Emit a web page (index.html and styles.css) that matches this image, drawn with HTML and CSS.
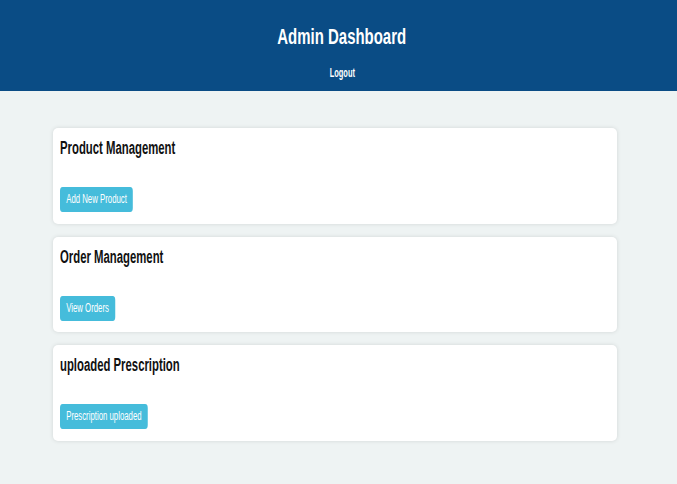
FILE: index.html
```html
<!DOCTYPE html>
<html>
<head>
<meta charset="utf-8">
<link rel="stylesheet" href="styles.css">
</head>
<body>
<header class="topbar">
  <h1 class="title"><span class="squeeze">Admin Dashboard</span></h1>
  <nav class="nav"><a class="logout" href="#">Logout</a></nav>
</header>
<main class="content">
  <section class="card">
    <h2 class="card-title"><span class="squeeze-left">Product Management</span></h2>
    <a class="btn" href="#">Add New Product</a>
  </section>
  <section class="card">
    <h2 class="card-title"><span class="squeeze-left">Order Management</span></h2>
    <a class="btn" href="#">View Orders</a>
  </section>
  <section class="card">
    <h2 class="card-title"><span class="squeeze-left">uploaded Prescription</span></h2>
    <a class="btn" href="#">Prescription uploaded</a>
  </section>
</main>
</body>
</html>
```

FILE: styles.css
```css
html, body {
  margin: 0;
  padding: 0;
}
body {
  background: #eef3f3;
  font-family: "Liberation Sans", Arial, sans-serif;
  color: #111;
  min-height: 484px;
}
.squeeze {
  display: inline-block;
  transform: scaleX(0.68);
  transform-origin: center;
}
.squeeze-left {
  display: inline-block;
  transform: scaleX(0.63);
  transform-origin: left center;
  white-space: nowrap;
}
.topbar {
  background: #0a4c85;
  height: 91px;
  box-sizing: border-box;
  padding: 23px 0 0 7px;
  text-align: center;
  color: #fff;
}
.title {
  margin: 0;
  font-size: 22px;
  line-height: 27px;
  font-weight: bold;
}
.nav {
  margin-top: 15px;
  line-height: 14px;
}
.logout {
  display: inline-block;
  color: #fff;
  text-decoration: none;
  font-weight: bold;
  font-size: 12px;
  transform: scaleX(0.62);
  transform-origin: center;
}
.content {
  padding: 37px 0 0 53px;
  display: flex;
  flex-direction: column;
  gap: 13px;
}
.card {
  width: 564px;
  box-sizing: border-box;
  height: 95.5px;
  background: #fff;
  border-radius: 5px;
  box-shadow: 0 0 4px rgba(0, 0, 0, 0.12);
  padding: 10px 7px 0 7px;
  display: flex;
  flex-direction: column;
  align-items: flex-start;
}
.card-title {
  margin: 0 0 28px 0;
  font-size: 18px;
  line-height: 21px;
  font-weight: bold;
  color: #111;
}
.btn {
  display: inline-block;
  height: 25px;
  line-height: 25px;
  padding: 0 9.5px;
  background: #45bcdb;
  color: #fff;
  font-size: 12px;
  text-decoration: none;
  border-radius: 4px;
  transform: scaleX(0.65);
  transform-origin: left center;
  white-space: nowrap;
}
```
